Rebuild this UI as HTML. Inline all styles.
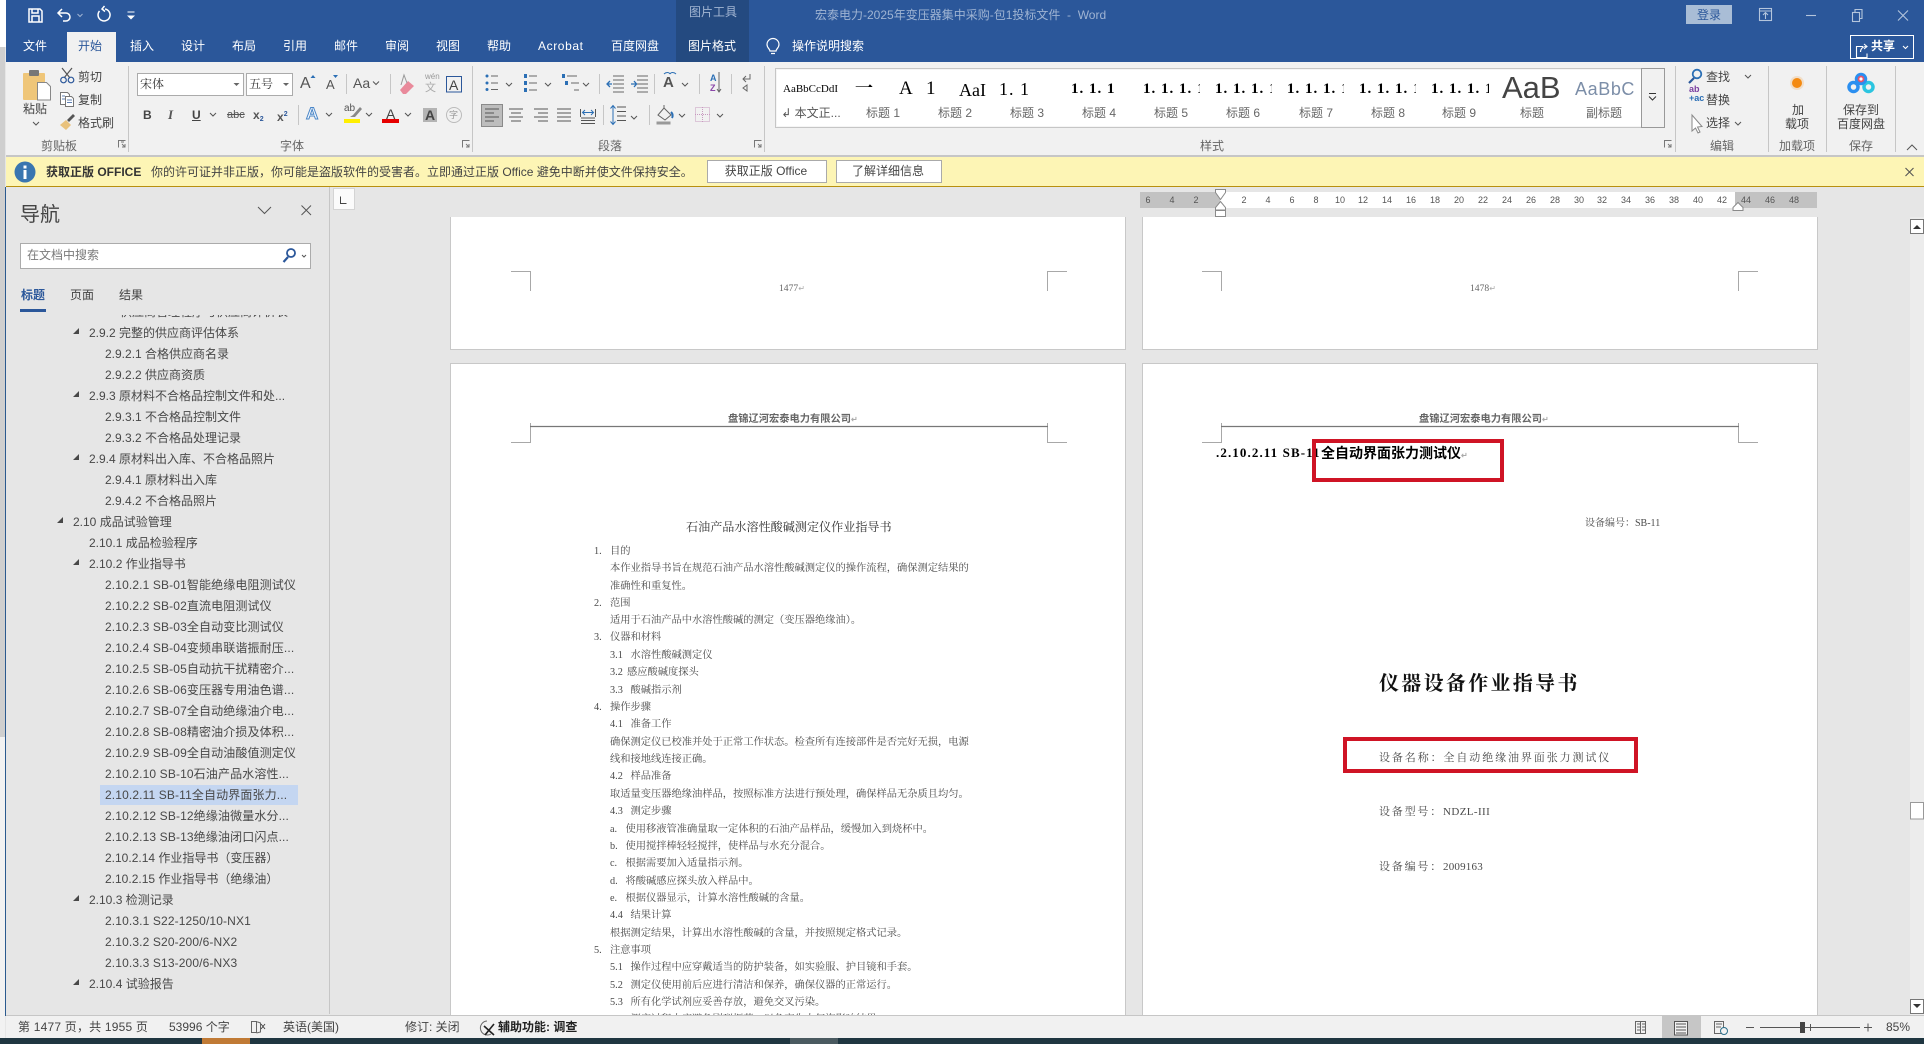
<!DOCTYPE html>
<html lang="zh-CN"><head><meta charset="utf-8"><title>Word</title>
<style>
html,body{margin:0;padding:0;width:1924px;height:1044px;overflow:hidden;background:#e6e6e6}
body{position:relative;font-family:"Liberation Sans","Noto Sans CJK SC",sans-serif;color:#444}
div.b{position:absolute}
p{position:absolute;margin:0;white-space:nowrap;line-height:16px;font-size:12px}
.c{transform:translateX(-50%)}
.w{color:#fff}
.d{font-family:"Liberation Serif","Noto Serif CJK SC",serif;font-size:10.26px;color:#4a4a4a;margin-top:1px;filter:blur(.3px)}
.n{display:inline-block;width:16px}.n2{display:inline-block;width:20.5px}.n3{display:inline-block;width:15.5px}.n4{display:inline-block;width:17px}
.r{color:#484848}
.q{letter-spacing:.13px}
.rl{font-size:9px;color:#555;width:20px;text-align:center;top:192px}
.s{font-family:"Liberation Serif","Noto Serif CJK SC",serif;color:#000;overflow:hidden}
.l{color:#666;font-size:12px}
.m{font-family:"Liberation Serif",serif;font-size:9.6px;color:#666}
.ret{color:#aaa;font-size:8px}
svg{position:absolute;left:0;top:0;z-index:5}
</style></head><body>

<!-- chrome backgrounds -->
<div class="b" style="left:0;top:0;width:6px;height:47px;background:#fff"></div>
<div class="b" style="left:0;top:47px;width:5px;height:690px;background:#cfcfcf"></div>
<div class="b" style="left:0;top:737px;width:5px;height:301px;background:#f2f2f2"></div>
<div class="b" style="left:6px;top:0;width:1918px;height:62px;background:#2b579a"></div>
<div class="b" style="left:676px;top:0;width:73px;height:62px;background:#244a80"></div>
<div class="b" style="left:6px;top:62px;width:1918px;height:94px;background:#f1f1f1"></div>
<div class="b" style="left:6px;top:155px;width:1918px;height:2px;background:#c6c6c6"></div>
<div class="b" style="left:6px;top:157px;width:1918px;height:29px;background:#fdf5b5"></div>
<div class="b" style="left:6px;top:186px;width:1918px;height:1px;background:#b8900f"></div>
<div class="b" style="left:67px;top:32px;width:49px;height:30px;background:#f1f1f1"></div>
<div class="b" style="left:1686px;top:5px;width:46px;height:19px;background:#a9bdd6"></div>
<div class="b" style="left:1850px;top:35px;width:62px;height:22px;border:1px solid #fff"></div>

<!-- title -->
<p style="left:689px;top:4px;color:#a3b6d2">图片工具</p>
<p style="left:815px;top:7px;color:#9fb4d3">宏泰电力-2025年变压器集中采购-包1投标文件&nbsp; -&nbsp; Word</p>
<p style="left:1697px;top:7px;color:#2b579a">登录</p>
<p class="w" style="left:1871px;top:38px;font-weight:700">共享</p>
<!-- tabs -->
<p class="w" style="left:23px;top:38px">文件</p>
<p style="left:78px;top:38px;color:#2b579a">开始</p>
<p class="w" style="left:130px;top:38px">插入</p>
<p class="w" style="left:181px;top:38px">设计</p>
<p class="w" style="left:232px;top:38px">布局</p>
<p class="w" style="left:283px;top:38px">引用</p>
<p class="w" style="left:334px;top:38px">邮件</p>
<p class="w" style="left:385px;top:38px">审阅</p>
<p class="w" style="left:436px;top:38px">视图</p>
<p class="w" style="left:487px;top:38px">帮助</p>
<p class="w" style="left:538px;top:38px;letter-spacing:.6px">Acrobat</p>
<p class="w" style="left:611px;top:38px">百度网盘</p>
<p class="w" style="left:688px;top:38px">图片格式</p>
<p class="w" style="left:792px;top:38px">操作说明搜索</p>

<!-- clipboard -->
<p style="left:23px;top:101px;font-size:12px">粘贴</p>
<p style="left:78px;top:69px">剪切</p>
<p style="left:78px;top:92px">复制</p>
<p style="left:78px;top:115px">格式刷</p>
<p class="l" style="left:41px;top:138px">剪贴板</p>
<!-- font -->
<div class="b" style="left:137px;top:73px;width:105px;height:21px;border:1px solid #ababab;background:#fff"></div>
<div class="b" style="left:246px;top:73px;width:45px;height:21px;border:1px solid #ababab;background:#fff"></div>
<p style="left:140px;top:76px;font-family:'Liberation Serif','Noto Serif CJK SC',serif;color:#333">宋体</p>
<p style="left:249px;top:76px;font-family:'Liberation Serif','Noto Serif CJK SC',serif;color:#333">五号</p>
<p style="left:300px;top:76px;font-size:16px;color:#555">A</p>
<p style="left:326px;top:77px;font-size:13px;color:#555">A</p>
<p style="left:353px;top:75px;font-size:14px;color:#555">Aa</p>
<p style="left:425px;top:69px;font-size:8px;color:#999">wén</p>
<p style="left:425px;top:80px;font-size:11px;color:#aaa">文</p>
<p style="left:449px;top:77px;font-size:14px;color:#444">A</p>
<p style="left:143px;top:107px;font-weight:700;font-size:12px;color:#444">B</p>
<p style="left:168px;top:107px;font-style:italic;font-family:'Liberation Serif',serif;font-weight:700;font-size:13px;color:#555">I</p>
<p style="left:192px;top:107px;font-weight:700;font-size:12px;color:#444;text-decoration:underline">U</p>
<p style="left:227px;top:107px;font-size:11px;color:#555;text-decoration:line-through">abc</p>
<p style="left:253px;top:107px;font-weight:700;font-size:12px;color:#555">x<span style="font-size:7px;color:#2b579a;vertical-align:-2px">2</span></p>
<p style="left:277px;top:107px;font-weight:700;font-size:12px;color:#555">x<span style="font-size:7px;color:#2b579a;vertical-align:5px">2</span></p>
<p style="left:306px;top:106px;font-size:17px;color:#f4f9ff;-webkit-text-stroke:1px #4a86c7;font-weight:700">A</p>
<p style="left:344px;top:101px;font-size:10px;color:#555">ab</p>
<p style="left:386px;top:106px;font-size:14px;color:#444">A</p>
<div class="b" style="left:423px;top:108px;width:14px;height:14px;background:#b4b4b4"></div>
<p style="left:425px;top:107px;font-size:14px;color:#444;font-weight:700">A</p>
<p style="left:449px;top:107px;font-size:9px;color:#999">字</p>
<p class="l" style="left:280px;top:138px">字体</p>
<!-- para -->
<p style="left:663px;top:75px;font-size:15px;font-weight:700;color:#555">A</p>
<p style="left:710px;top:70px;font-size:9px;font-weight:700;color:#2b6fb5">A</p>
<p style="left:710px;top:80px;font-size:9px;font-weight:700;color:#8a46a8">Z</p>
<p class="l" style="left:598px;top:138px">段落</p>

<!-- style gallery -->
<div class="b" style="left:775px;top:68px;width:866px;height:58px;background:#fff;border:1px solid #c6c6c6;border-right:0;box-shadow:inset 0 0 0 1px #f5f5f5"></div>
<div class="b" style="left:1641px;top:68px;width:22px;height:58px;background:#f1f1f1;border:1px solid #999"></div>
<p class="s" style="left:783px;top:81px;width:59px;font-size:11px">AaBbCcDdI</p>
<p class="s" style="left:855px;top:76px;width:20px;font-size:18px;font-weight:700;line-height:24px">一</p>
<p class="s" style="left:899px;top:79px;font-size:19px;line-height:20px;font-weight:400">A</p>
<p class="s" style="left:926px;top:79px;font-size:19px;line-height:20px">1</p>
<p class="s" style="left:959px;top:80px;width:27px;font-size:18px;line-height:20px">AaI</p>
<p class="s" style="left:999px;top:79px;width:30px;font-size:18px;line-height:20px;letter-spacing:1px">1. 1</p>
<p class="s" style="left:1071px;top:81px;font-size:15px;font-weight:700;letter-spacing:1px">1. 1. 1</p>
<p class="s" style="left:1143px;top:81px;width:57px;font-size:15px;font-weight:700;letter-spacing:1px">1. 1. 1. 1</p>
<p class="s" style="left:1215px;top:81px;width:57px;font-size:15px;font-weight:700;letter-spacing:1px">1. 1. 1. 1</p>
<p class="s" style="left:1287px;top:81px;width:57px;font-size:15px;font-weight:700;letter-spacing:1px">1. 1. 1. 1</p>
<p class="s" style="left:1359px;top:81px;width:57px;font-size:15px;font-weight:700;letter-spacing:1px">1. 1. 1. 1</p>
<p class="s" style="left:1431px;top:81px;width:58px;font-size:15px;font-weight:700;letter-spacing:1px">1. 1. 1. 1</p>
<p style="left:1502px;top:70px;width:62px;font-size:31px;line-height:36px;color:#444;font-weight:400;overflow:hidden;height:28px">AaB</p>
<p style="left:1575px;top:79px;font-size:18px;line-height:20px;color:#7c8ea8;letter-spacing:.6px">AaBbC</p>
<p class="c" style="left:811px;top:105px;color:#555;white-space:pre">↲ 本文正...</p>
<p class="c" style="left:883px;top:105px;color:#666">标题 1</p>
<p class="c" style="left:955px;top:105px;color:#666">标题 2</p>
<p class="c" style="left:1027px;top:105px;color:#666">标题 3</p>
<p class="c" style="left:1099px;top:105px;color:#666">标题 4</p>
<p class="c" style="left:1171px;top:105px;color:#666">标题 5</p>
<p class="c" style="left:1243px;top:105px;color:#666">标题 6</p>
<p class="c" style="left:1316px;top:105px;color:#666">标题 7</p>
<p class="c" style="left:1388px;top:105px;color:#666">标题 8</p>
<p class="c" style="left:1459px;top:105px;color:#666">标题 9</p>
<p class="c" style="left:1532px;top:105px;color:#666">标题</p>
<p class="c" style="left:1604px;top:105px;color:#666">副标题</p>
<p class="l" style="left:1200px;top:138px">样式</p>
<!-- edit etc -->
<p style="left:1706px;top:69px">查找</p>
<p style="left:1706px;top:92px">替换</p>
<p style="left:1706px;top:115px">选择</p>
<p style="left:1689px;top:85px;font-size:9px;line-height:9px;color:#7a3fa0;font-weight:700">ab</p>
<p style="left:1689px;top:94px;font-size:9px;line-height:9px;color:#2b6fb5;font-weight:700">+ac</p>
<p class="l" style="left:1710px;top:138px">编辑</p>
<p class="c" style="left:1798px;top:102px">加</p>
<p class="c" style="left:1797px;top:116px">载项</p>
<p class="l" style="left:1779px;top:138px">加载项</p>
<p class="c" style="left:1861px;top:102px">保存到</p>
<p class="c" style="left:1861px;top:116px">百度网盘</p>
<p class="l" style="left:1849px;top:138px">保存</p>

<!-- message bar -->
<p style="left:46px;top:164px;font-weight:700;color:#333">获取正版 OFFICE</p>
<p style="left:151px;top:164px;color:#444">你的许可证并非正版&#65292;你可能是盗版软件的受害者。立即通过正版 Office 避免中断并使文件保持安全。</p>
<div class="b" style="left:707px;top:160px;width:118px;height:21px;background:#fff;border:1px solid #aaa"></div>
<div class="b" style="left:836px;top:160px;width:104px;height:21px;background:#fff;border:1px solid #aaa"></div>
<p class="c" style="left:766px;top:163px">获取正版 Office</p>
<p class="c" style="left:888px;top:163px">了解详细信息</p>

<!-- nav pane -->
<div class="b" style="left:5px;top:187px;width:1px;height:829px;background:#2b5a8f"></div>
<div class="b" style="left:329px;top:187px;width:1px;height:827px;background:#c6c6c6"></div>
<p style="left:20px;top:203px;font-size:20px;line-height:24px;color:#444">导航</p>
<div class="b" style="left:20px;top:243px;width:289px;height:24px;background:#fff;border:1px solid #ababab"></div>
<p style="left:27px;top:247px;color:#7a7a7a">在文档中搜索</p>
<p style="left:21px;top:287px;color:#2b579a;font-weight:700">标题</p>
<p style="left:70px;top:287px">页面</p>
<p style="left:119px;top:287px">结果</p>
<div class="b" style="left:20px;top:309px;width:26px;height:3px;background:#2b579a"></div>
<div class="b" style="left:100px;top:785px;width:198px;height:20px;background:#c4d6f1"></div>
<div class="b" style="left:90px;top:315px;width:230px;height:3px;overflow:hidden"><p class="r" style="left:30px;top:-11px">供应商管理程序与供应商评价表</p></div>

<p class="r" style="left:89px;top:325px">2.9.2 完整的供应商评估体系</p>
<p class="r" style="left:105px;top:346px">2.9.2.1 合格供应商名录</p>
<p class="r" style="left:105px;top:367px">2.9.2.2 供应商资质</p>
<p class="r" style="left:89px;top:388px">2.9.3 原材料不合格品控制文件和处...</p>
<p class="r" style="left:105px;top:409px">2.9.3.1 不合格品控制文件</p>
<p class="r" style="left:105px;top:430px">2.9.3.2 不合格品处理记录</p>
<p class="r" style="left:89px;top:451px">2.9.4 原材料出入库、不合格品照片</p>
<p class="r" style="left:105px;top:472px">2.9.4.1 原材料出入库</p>
<p class="r" style="left:105px;top:493px">2.9.4.2 不合格品照片</p>
<p class="r" style="left:73px;top:514px">2.10 成品试验管理</p>
<p class="r" style="left:89px;top:535px">2.10.1 成品检验程序</p>
<p class="r" style="left:89px;top:556px">2.10.2 作业指导书</p>
<p class="r q" style="left:105px;top:577px">2.10.2.1 SB-01智能绝缘电阻测试仪</p>
<p class="r q" style="left:105px;top:598px">2.10.2.2 SB-02直流电阻测试仪</p>
<p class="r q" style="left:105px;top:619px">2.10.2.3 SB-03全自动变比测试仪</p>
<p class="r q" style="left:105px;top:640px">2.10.2.4 SB-04变频串联谐振耐压...</p>
<p class="r q" style="left:105px;top:661px">2.10.2.5 SB-05自动抗干扰精密介...</p>
<p class="r q" style="left:105px;top:682px">2.10.2.6 SB-06变压器专用油色谱...</p>
<p class="r q" style="left:105px;top:703px">2.10.2.7 SB-07全自动绝缘油介电...</p>
<p class="r q" style="left:105px;top:724px">2.10.2.8 SB-08精密油介损及体积...</p>
<p class="r q" style="left:105px;top:745px">2.10.2.9 SB-09全自动油酸值测定仪</p>
<p class="r q" style="left:105px;top:766px">2.10.2.10 SB-10石油产品水溶性...</p>
<p class="r q" style="left:105px;top:787px">2.10.2.11 SB-11全自动界面张力...</p>
<p class="r q" style="left:105px;top:808px">2.10.2.12 SB-12绝缘油微量水分...</p>
<p class="r q" style="left:105px;top:829px">2.10.2.13 SB-13绝缘油闭口闪点...</p>
<p class="r" style="left:105px;top:850px">2.10.2.14 作业指导书&#65288;变压器&#65289;</p>
<p class="r" style="left:105px;top:871px">2.10.2.15 作业指导书&#65288;绝缘油&#65289;</p>
<p class="r" style="left:89px;top:892px">2.10.3 检测记录</p>
<p class="r q" style="left:105px;top:913px">2.10.3.1 S22-1250/10-NX1</p>
<p class="r q" style="left:105px;top:934px">2.10.3.2 S20-200/6-NX2</p>
<p class="r q" style="left:105px;top:955px">2.10.3.3 S13-200/6-NX3</p>
<p class="r" style="left:89px;top:976px">2.10.4 试验报告</p>

<!-- ruler -->
<div class="b" style="left:333px;top:188px;width:22px;height:22px;background:#fbfbfb;border:1px solid #d4d4d4;box-sizing:border-box"></div>
<div class="b" style="left:1140px;top:192px;width:677px;height:16px;background:#c2c2c2"></div>
<div class="b" style="left:1220px;top:192px;width:515px;height:16px;background:#fff"></div>
<p class="rl" style="left:1138px">6</p><p class="rl" style="left:1162px">4</p><p class="rl" style="left:1186px">2</p>
<p class="rl" style="left:1234px">2</p><p class="rl" style="left:1258px">4</p><p class="rl" style="left:1282px">6</p><p class="rl" style="left:1306px">8</p><p class="rl" style="left:1330px">10</p><p class="rl" style="left:1353px">12</p><p class="rl" style="left:1377px">14</p><p class="rl" style="left:1401px">16</p><p class="rl" style="left:1425px">18</p><p class="rl" style="left:1449px">20</p><p class="rl" style="left:1473px">22</p><p class="rl" style="left:1497px">24</p><p class="rl" style="left:1521px">26</p><p class="rl" style="left:1545px">28</p><p class="rl" style="left:1569px">30</p><p class="rl" style="left:1592px">32</p><p class="rl" style="left:1616px">34</p><p class="rl" style="left:1640px">36</p><p class="rl" style="left:1664px">38</p><p class="rl" style="left:1688px">40</p><p class="rl" style="left:1712px">42</p><p class="rl" style="left:1736px">44</p><p class="rl" style="left:1760px">46</p><p class="rl" style="left:1784px">48</p>

<!-- pages -->
<div class="b" style="left:450px;top:217px;width:676px;height:133px;background:#fff;border:solid #c8c8c8;border-width:0 1px 1px;box-sizing:border-box"></div>
<div class="b" style="left:1142px;top:217px;width:676px;height:133px;background:#fff;border:solid #c8c8c8;border-width:0 1px 1px;box-sizing:border-box"></div>
<div class="b" style="left:450px;top:363px;width:676px;height:660px;background:#fff;border:1px solid #c8c8c8;box-sizing:border-box"></div>
<div class="b" style="left:1142px;top:363px;width:676px;height:660px;background:#fff;border:1px solid #c8c8c8;box-sizing:border-box"></div>

<p class="m" style="left:779px;top:281px">1477<span class="ret">↵</span></p>
<p class="m" style="left:1470px;top:281px">1478<span class="ret">↵</span></p>
<p style="left:728px;top:412px;font-size:10.25px;font-weight:700;color:#666">盘锦辽河宏泰电力有限公司<span class="ret">↵</span></p>
<p style="left:1419px;top:412px;font-size:10.25px;font-weight:700;color:#666">盘锦辽河宏泰电力有限公司<span class="ret">↵</span></p>

<!-- left doc -->
<p class="d" style="left:686px;top:518px;font-size:12.1px;color:#333">石油产品水溶性酸碱测定仪作业指导书</p>
<p class="d" style="left:594px;top:543px"><span class="n">1.</span>目的</p>
<p class="d" style="left:610px;top:560px">本作业指导书旨在规范石油产品水溶性酸碱测定仪的操作流程&#65292;确保测定结果的</p>
<p class="d" style="left:610px;top:578px">准确性和重复性。</p>
<p class="d" style="left:594px;top:595px"><span class="n">2.</span>范围</p>
<p class="d" style="left:610px;top:612px">适用于石油产品中水溶性酸碱的测定&#65288;变压器绝缘油&#65289;。</p>
<p class="d" style="left:594px;top:629px"><span class="n">3.</span>仪器和材料</p>
<p class="d" style="left:610px;top:647px"><span class="n2">3.1</span>水溶性酸碱测定仪</p>
<p class="d" style="left:610px;top:664px"><span class="n4">3.2</span>感应酸碱度探头</p>
<p class="d" style="left:610px;top:682px"><span class="n2">3.3</span>酸碱指示剂</p>
<p class="d" style="left:594px;top:699px"><span class="n">4.</span>操作步骤</p>
<p class="d" style="left:610px;top:716px"><span class="n2">4.1</span>准备工作</p>
<p class="d" style="left:610px;top:734px">确保测定仪已校准并处于正常工作状态。检查所有连接部件是否完好无损&#65292;电源</p>
<p class="d" style="left:610px;top:751px">线和接地线连接正确。</p>
<p class="d" style="left:610px;top:768px"><span class="n2">4.2</span>样品准备</p>
<p class="d" style="left:610px;top:786px">取适量变压器绝缘油样品&#65292;按照标准方法进行预处理&#65292;确保样品无杂质且均匀。</p>
<p class="d" style="left:610px;top:803px"><span class="n2">4.3</span>测定步骤</p>
<p class="d" style="left:610px;top:821px"><span class="n3">a.</span>使用移液管准确量取一定体积的石油产品样品&#65292;缓慢加入到烧杯中。</p>
<p class="d" style="left:610px;top:838px"><span class="n3">b.</span>使用搅拌棒轻轻搅拌&#65292;使样品与水充分混合。</p>
<p class="d" style="left:610px;top:855px"><span class="n3">c.</span>根据需要加入适量指示剂。</p>
<p class="d" style="left:610px;top:873px"><span class="n3">d.</span>将酸碱感应探头放入样品中。</p>
<p class="d" style="left:610px;top:890px"><span class="n3">e.</span>根据仪器显示&#65292;计算水溶性酸碱的含量。</p>
<p class="d" style="left:610px;top:907px"><span class="n2">4.4</span>结果计算</p>
<p class="d" style="left:610px;top:925px">根据测定结果&#65292;计算出水溶性酸碱的含量&#65292;并按照规定格式记录。</p>
<p class="d" style="left:594px;top:942px"><span class="n">5.</span>注意事项</p>
<p class="d" style="left:610px;top:959px"><span class="n2">5.1</span>操作过程中应穿戴适当的防护装备&#65292;如实验服、护目镜和手套。</p>
<p class="d" style="left:610px;top:977px"><span class="n2">5.2</span>测定仪使用前后应进行清洁和保养&#65292;确保仪器的正常运行。</p>
<p class="d" style="left:610px;top:994px"><span class="n2">5.3</span>所有化学试剂应妥善存放&#65292;避免交叉污染。</p>
<p class="d" style="left:610px;top:1011px"><span class="n2">5.4</span>测定过程中应避免剧烈振荡&#65292;以免产生大气泡影响结果。</p>

<!-- right doc -->
<p style="left:1216px;top:445px;font-family:'Liberation Serif',serif;font-weight:700;font-size:13px;letter-spacing:1.1px;color:#000">.2.10.2.11 SB-11</p>
<p style="left:1321px;top:445px;font-size:14px;font-weight:700;color:#000">全自动界面张力测试仪<span class="ret">↵</span></p>
<p class="d" style="left:1585px;top:515px;font-size:10px">设备编号&#65306;SB-11</p>
<p style="left:1379px;top:670px;font-family:'Noto Serif CJK SC',serif;font-size:20px;line-height:24px;font-weight:700;letter-spacing:2.3px;color:#111">仪器设备作业指导书</p>
<p class="d" style="left:1379px;top:749px;font-size:11px;letter-spacing:1.9px">设备名称&#65306;全自动绝缘油界面张力测试仪</p>
<p class="d" style="left:1379px;top:803px;font-size:11px;letter-spacing:1.8px">设备型号&#65306;<span style="letter-spacing:.4px">NDZL-III</span></p>
<p class="d" style="left:1379px;top:858px;font-size:11px;letter-spacing:1.8px">设备编号&#65306;<span style="letter-spacing:.2px">2009163</span></p>

<!-- scrollbar -->
<div class="b" style="left:1910px;top:217px;width:14px;height:799px;background:#ececec"></div>

<!-- status bar -->
<div class="b" style="left:6px;top:1016px;width:1918px;height:22px;background:#f1f1f1;box-shadow:0 -1px 0 #c6c6c6"></div>
<div class="b" style="left:0;top:1038px;width:1924px;height:6px;background:#1f3641"></div>
<div class="b" style="left:202px;top:1038px;width:48px;height:6px;background:#c07a35"></div>
<div class="b" style="left:790px;top:1038px;width:48px;height:6px;background:#4a5a60"></div>
<div class="b" style="left:1662px;top:1016px;width:39px;height:22px;background:#c6c6c6"></div>
<p style="left:18px;top:1019px;color:#444;letter-spacing:.2px">第 1477 页&#65292;共 1955 页</p>
<p style="left:169px;top:1019px;color:#444">53996 个字</p>
<p style="left:283px;top:1019px;color:#444">英语(美国)</p>
<p style="left:405px;top:1019px;color:#444">修订: 关闭</p>
<p style="left:498px;top:1019px;color:#222;font-weight:700">辅助功能: 调查</p>
<p style="left:1886px;top:1019px;color:#444">85%</p>

<svg width="1924" height="1044" viewBox="0 0 1924 1044" fill="none">
<!-- QAT -->
<g stroke="#fff" stroke-width="1.5">
<path d="M29 9h11l2 2v11H29z"/><path d="M32 9v4h6V9M32 22v-6h7v6"/>
<path d="M62 9l-4 4 4 4M58 13h8a4 4 0 0 1 0 8h-3"/>
<path d="M99.500 11a6 6 0 1 0 5.500-2"/><path d="M104.500 6l-2.500 3 3 2.500"/>
</g>
<path d="M77.500 14l2.500 2.500 2.500-2.500" stroke="#9fb4d3"/>
<path d="M127.500 12h7" stroke="#fff"/><path d="M127 15.500h8l-4 4z" fill="#fff"/>
<!-- bulb -->
<path d="M770 51c0-2-3-3-3-6.500a6 6 0 0 1 12 0c0 3.500-3 4.500-3 6.500zM771 53.500h4" stroke="#fff" stroke-width="1.200"/>
<!-- window buttons -->
<g stroke="#b4c5dc" stroke-width="1.100">
<rect x="1759.500" y="8.500" width="12" height="12"/><path d="M1760 11h11M1765.500 19v-6M1763 15l2.500-2.500 2.500 2.500"/>
<path d="M1806 15.500h10"/>
<rect x="1852.500" y="12.500" width="7" height="9"/><path d="M1855 12v-2.500h7v9h-2.500"/>
<path d="M1898 10.500l10 10M1908 10.500l-10 10"/>
</g>
<!-- share -->
<g stroke="#fff" stroke-width="1.100"><path d="M1863 46.500h-6.500v11h10.500v-4"/><path d="M1860.500 52c0-3 2-5.500 6-5.500M1864 44l3 2.500-3 2.500"/><path d="M1903 46l2.500 2.500 2.500-2.500"/></g>
<!-- ribbon dividers -->
<g fill="#c6c6c6" shape-rendering="crispEdges">
<rect x="128" y="66" width="1" height="86"/><rect x="472" y="66" width="1" height="86"/><rect x="764" y="66" width="1" height="86"/><rect x="1675" y="66" width="1" height="86"/><rect x="1768" y="66" width="1" height="86"/><rect x="1826" y="66" width="1" height="86"/><rect x="1895" y="66" width="1" height="86"/>
<rect x="346" y="74" width="1" height="20"/><rect x="390" y="74" width="1" height="20"/><rect x="298" y="105" width="1" height="20"/><rect x="599" y="74" width="1" height="20"/><rect x="654" y="74" width="1" height="20"/><rect x="699" y="74" width="1" height="20"/><rect x="731" y="74" width="1" height="20"/><rect x="603" y="105" width="1" height="20"/><rect x="649" y="105" width="1" height="20"/>
</g>
<!-- clipboard -->
<rect x="23" y="73" width="22" height="27" rx="1" fill="#efc679"/><rect x="29" y="70" width="10" height="6" rx="1" fill="#777"/>
<path d="M37.500 82.500h9l4 4v13.500h-13z" fill="#fff" stroke="#888"/>
<path d="M33 122l3 3 3-3" stroke="#555"/>
<path d="M62 68l8 10M72 68l-8 10" stroke="#555" stroke-width="1.200"/><circle cx="63.500" cy="80" r="2.800" stroke="#2b579a" stroke-width="1.200"/><circle cx="71" cy="80" r="2.800" stroke="#2b579a" stroke-width="1.200"/>
<path d="M60.500 92.500h7l2 2v10h-9z" fill="#fff" stroke="#777"/><path d="M65.500 96.500h6l2 2v8h-8z" fill="#fff" stroke="#777"/><path d="M67 100h5M67 102.500h5M62 96h3M62 99h3" stroke="#2b579a" stroke-width=".8"/>
<path d="M60 125l6-5 5 5-5 5z" fill="#e9c27c"/><path d="M68 121l6-6" stroke="#555" stroke-width="2.800"/>
<!-- font -->
<path d="M233.500 83l3 3 3-3z" fill="#666"/><path d="M283 83l3 3 3-3z" fill="#666"/>
<path d="M310.500 78l2.500-3 2.500 3z" fill="#2b6fb5"/><path d="M333 75h5l-2.500 3z" fill="#2b6fb5"/>
<path d="M373 81.500l3 3 3-3" stroke="#555"/>
<path d="M400 90l8-9 6 5-8 8h-3z" fill="#e98a9b"/><path d="M401 85l3-10 3 8" stroke="#999"/>
<rect x="446.500" y="76.500" width="15" height="15.500" stroke="#2b579a"/>
<path d="M210 113l3 3 3-3M326 113l3 3 3-3M366 113l3 3 3-3M405 113l3 3 3-3" stroke="#555"/>
<path d="M353 115l7-8 2 2-7 8zM350 117l3-2 2 2z" fill="#888"/>
<rect x="344" y="119" width="16" height="4" fill="#ffef00"/><rect x="382" y="119" width="17" height="4" fill="#e60000"/>
<circle cx="454" cy="115" r="7.500" stroke="#bbb"/>
<!-- para row 1 -->
<g fill="#2b6fb5"><circle cx="487" cy="76" r="1.500"/><circle cx="487" cy="83" r="1.500"/><circle cx="487" cy="89.500" r="1.500"/><rect x="524" y="74" width="3" height="4"/><rect x="524" y="81" width="3" height="4"/><rect x="524" y="88" width="3" height="4"/><rect x="562" y="74" width="3" height="4"/><rect x="565" y="81" width="3" height="4"/></g>
<g stroke="#666" stroke-width="1">
<path d="M491 76h7M491 83h7M491 89.500h7M529 76h8M529 83h8M529 90h8M567 76h10M571 83h8M574 90h5"/>
<path d="M613 76h11M613 80h11M613 84h11M613 88h11M613 92h11M637 76h11M637 80h11M637 84h11M637 88h11M637 92h11"/>
</g>
<path d="M506 83l3 3 3-3M545 83l3 3 3-3M583 83l3 3 3-3M682 83l3 3 3-3M631 116l3 3 3-3M679 114l3 3 3-3M717 114l3 3 3-3" stroke="#555"/>
<path d="M612 84h-5M610 81l-3 3 3 3M631 84h5M634 81l2.500 3-2.500 3" stroke="#2b6fb5" stroke-width="1.300"/>
<path d="M664 74c2-2 5-2 6 0M676 74c-2-2-5-2-6 0" stroke="#2b6fb5"/>
<path d="M719 72v20M717 89l2 3 2-3" stroke="#666"/>
<path d="M750 74v5h-7M746 76l-3 3 3 3M743 88l4-3v6z" stroke="#666"/>
<!-- align -->
<rect x="481.500" y="104.500" width="21" height="22" fill="#bdbdbd" stroke="#8a8a8a"/>
<g stroke="#555" stroke-width="1">
<path d="M485 109h14M485 113h9M485 117h14M485 121h9"/>
<path d="M509 109h14M511 113h10M509 117h14M511 121h10"/>
<path d="M534 109h14M538 113h10M534 117h14M538 121h10"/>
<path d="M557 109h14M557 113h14M557 117h14M557 121h14"/>
<path d="M580.500 109v8M595.500 109v8M581 123.500h14M581 120.500h14M581 118h14"/>
<path d="M617 107h9M617 111.500h9M617 116h9M617 120.500h9"/>
<path d="M656.500 123h14" stroke="#999" stroke-width="3"/>
</g>
<path d="M583 112.500h10M585 110l-2.500 2.500 2.500 2.500M591 110l2.500 2.500-2.500 2.500" stroke="#2b6fb5"/>
<path d="M613 106v18M610.500 108.500l2.500-3 2.500 3M610.500 121.500l2.500 3 2.500-3" stroke="#2b6fb5"/>
<path d="M658 115l6-7 7 7-6 5zM664 108v-3" stroke="#666"/><path d="M671 112c2 2 2 4 1 6" stroke="#2b6fb5" stroke-width="2"/>
<rect x="695.500" y="107.500" width="14" height="14" stroke="#c89ac0" stroke-dasharray="1 1"/><path d="M695 114.500h15M702.500 107v15" stroke="#c89ac0" stroke-dasharray="1 1"/>
<!-- style scroll -->
<path d="M1649 93.500h7M1649 96.500l3.500 3.500 3.500-3.500" stroke="#333"/>
<!-- dialog launchers -->
<g stroke="#777"><path d="M118.500 147.500v-7h7M122 144l3 3M125 144v3h-3M121 142h3"/><path d="M462.500 147.500v-7h7M466 144l3 3M469 144v3h-3"/><path d="M754.500 147.500v-7h7M758 144l3 3M761 144v3h-3"/><path d="M1664.500 147.500v-7h7M1668 144l3 3M1671 144v3h-3"/></g>
<!-- editing -->
<circle cx="1697" cy="74" r="4.300" stroke="#2b6fb5" stroke-width="1.800"/><path d="M1694 78l-5 5" stroke="#2b579a" stroke-width="2.200"/>
<path d="M1745 75l3 3 3-3M1735 122l3 3 3-3" stroke="#555"/>
<path d="M1692 115v16l3.500-3 2.500 5 2-1-2.500-5 4.500-.5z" fill="#fff" stroke="#888"/>
<circle cx="1797" cy="83" r="5" fill="#f58a12"/><circle cx="1797" cy="83" r="7" fill="#f58a12" opacity=".18"/>
<circle cx="1853.500" cy="87" r="4.500" stroke="#2b8ff0" stroke-width="3.500"/><circle cx="1868.500" cy="87" r="4.500" stroke="#2bc5e0" stroke-width="3.500"/><circle cx="1861" cy="79" r="4.500" stroke="#2b8ff0" stroke-width="3.500"/><circle cx="1861" cy="79" r="2.500" fill="#fff" stroke="#e8536b" stroke-width="1.800"/>
<path d="M1907 150l5-5 5 5" stroke="#555"/>
<!-- msg bar -->
<circle cx="25" cy="172" r="10.500" fill="#3a76b0"/><rect x="23.500" y="170" width="3" height="9" fill="#fff"/><rect x="23.500" y="165.500" width="3" height="3" fill="#fff"/>
<path d="M1905.500 168l8 8M1913.500 168l-8 8" stroke="#555" stroke-width="1.100"/>
<!-- nav -->
<path d="M258 207l6.500 6.500 6.500-6.500M301.500 205.500l9.500 9.500M311 205.500l-9.500 9.500" stroke="#555"/>
<circle cx="291" cy="253" r="4" stroke="#2b579a" stroke-width="1.800"/><path d="M288 257l-4.500 5" stroke="#2b579a" stroke-width="2.200"/>
<path d="M302 255l2 2 2-2" stroke="#555"/>
<g fill="#484848"><path d="M79 328v6h-6zM79 391v6h-6zM79 454v6h-6zM63 517v6h-6zM79 559v6h-6zM79 895v6h-6zM79 979v6h-6z"/></g>
<!-- tab marker -->
<path d="M340.500 196.500v7h6" stroke="#444"/>
<!-- ruler marks -->
<g fill="#fff" stroke="#8a8a8a">
<path d="M1215.500 189.500h10v3l-5 7-5-7z"/><path d="M1220.500 201.500l5 6v2.500h-10v-2.500z"/><rect x="1215.500" y="210.500" width="10" height="6"/>
<path d="M1738 202.500l5 5v3h-10v-3z"/>
</g>
<!-- page marks -->
<g stroke="#a8a8a8" shape-rendering="crispEdges">
<path d="M511 271.500h19.500V291M1067 271.500h-19.500V291M1202 271.500h19.500V291M1758 271.500h-19.500V291"/>
<path d="M530.500 423v19.500H511M1047.500 423v19.500H1067M1221.500 423v19.500H1202M1738.500 423v19.500H1758"/>
</g>
<path d="M530 426.500h518M1221 426.500h518" stroke="#777" stroke-width="1.200"/>
<!-- red boxes -->
<rect x="1314" y="441" width="188" height="39" stroke="#cf1425" stroke-width="4"/>
<rect x="1345" y="739" width="291" height="32" stroke="#cf1425" stroke-width="4"/>
<!-- scrollbar -->
<g fill="#fff" stroke="#777" shape-rendering="crispEdges">
<rect x="1910.500" y="219.500" width="13" height="14"/><rect x="1910.500" y="999.500" width="13" height="14"/><rect x="1910.500" y="802.500" width="13" height="16.500" stroke="#999"/>
</g>
<path d="M1913 229l4-4 4 4zM1913 1004h8l-4 4z" fill="#333"/>
<!-- status icons -->
<path d="M251.500 1021.500h5v11h-5zM256.500 1021.500l4 1.500v9l-4 1" stroke="#666"/><path d="M261 1024l4 5M265 1024l-4 5" stroke="#444"/>
<path d="M487 1021a7 7 0 1 0 4 13" stroke="#666"/><path d="M484 1026l10 9M494 1024l-9 11" stroke="#222" stroke-width="1.600"/>
<g stroke="#666"><rect x="1635.500" y="1021.500" width="5" height="12"/><rect x="1640.500" y="1021.500" width="5" height="12"/><path d="M1637 1024h3M1637 1027h3M1637 1030h3M1642 1024h3M1642 1027h3M1642 1030h3"/></g>
<rect x="1674.500" y="1021.500" width="13" height="13.500" stroke="#555" fill="#f1f1f1"/><path d="M1676 1024h10M1676 1027h10M1676 1030h10M1676 1033h10" stroke="#555"/>
<path d="M1714.500 1021.500h9v12h-9zM1716 1024h6M1716 1027h5" stroke="#666"/><circle cx="1724" cy="1031" r="3.500" fill="#f1f1f1" stroke="#2b6f8b"/>
<path d="M1746 1027.500h8M1760 1027.500h100M1810.500 1024v7M1864 1027.500h8M1868 1023.500v8" stroke="#555"/>
<rect x="1800" y="1022" width="5" height="11" fill="#444"/>
</svg>
</body></html>
